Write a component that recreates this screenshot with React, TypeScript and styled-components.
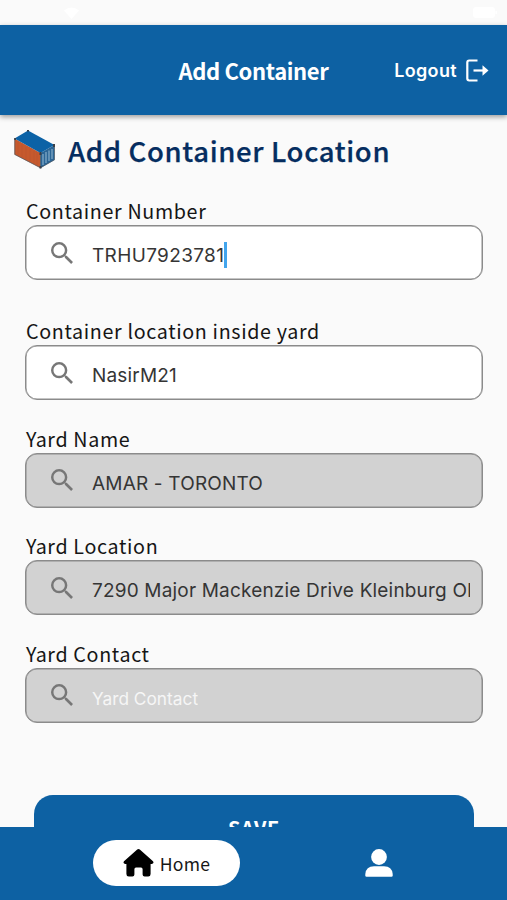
import React from "react";
import styled, { createGlobalStyle } from "styled-components";

const BLUE = "#0d61a3";
const HUMANIST = `"Noto Sans CJK JP", "Noto Sans CJK SC", "Noto Sans", sans-serif`;
const GROTESQUE = `Inter, Roboto, sans-serif`;

const GlobalStyle = createGlobalStyle`
  *, *::before, *::after { box-sizing: border-box; }
  body { margin: 0; background: #fafafa; }
`;

const Screen = styled.div`
  display: flex;
  flex-direction: column;
  width: 100%;
  height: 900px;
  overflow: hidden;
  background: #fafafa;
  font-family: ${HUMANIST};
`;

const StatusBar = styled.div`
  flex: 0 0 25px;
  display: flex;
  align-items: center;
  justify-content: space-between;
  padding: 0 10px 0 64px;
`;

const Header = styled.header`
  flex: 0 0 90px;
  display: grid;
  grid-template-columns: 1fr auto 1fr;
  align-items: center;
  padding: 0 18px;
  background: ${BLUE};
  color: #fff;
  box-shadow: 0 2px 5px rgba(0, 0, 0, 0.38);
  z-index: 1;
`;

const HeaderTitle = styled.h1`
  grid-column: 2;
  margin: 0;
  font-size: 22px;
  font-weight: 700;
  line-height: 30px;
  letter-spacing: -0.35px;
  white-space: nowrap;
`;

const LogoutButton = styled.button`
  justify-self: end;
  display: flex;
  align-items: center;
  gap: 9px;
  margin-top: 2px;
  padding: 0;
  border: 0;
  background: none;
  color: #fff;
  font: 600 18px/24px ${GROTESQUE};
  letter-spacing: 0.35px;
`;

const LogoutSvg = styled.svg`
  margin-top: -1px;
`;

const Content = styled.main`
  flex: 1;
  min-height: 0;
  overflow: hidden;
`;

const Heading = styled.div`
  display: flex;
  align-items: center;
  height: 83px;
  padding: 0 0 14px 14px;
  gap: 13px;
`;

const HeadingText = styled.h2`
  margin: 0;
  color: #052d60;
  font-size: 27.5px;
  font-weight: 500;
  line-height: 36px;
  letter-spacing: 0.65px;
  -webkit-text-stroke: 0.25px #052d60;
  white-space: nowrap;
`;

const Form = styled.form`
  display: flex;
  flex-direction: column;
`;

const Field = styled.label<{ $gap: number }>`
  display: flex;
  flex-direction: column;
  padding: 0 24px 0 25px;
  margin-bottom: ${(p) => p.$gap}px;
`;

const FieldLabel = styled.span`
  height: 27px;
  padding-left: 1px;
  color: #151515;
  font-size: 19.7px;
  line-height: 26px;
  letter-spacing: 0.65px;
  white-space: nowrap;
`;

const FieldBox = styled.span<{ $disabled?: boolean }>`
  display: flex;
  align-items: center;
  height: 55px;
  padding: 5px 12px 0 24px;
  border: 1px solid #8b8b8b;
  border-radius: 12px;
  box-shadow: inset 0 0 0 0.5px #8b8b8b;
  background: ${(p) => (p.$disabled ? "#d2d2d2" : "#fff")};
`;

const SearchSvg = styled.svg`
  flex: none;
  width: 22px;
  height: 22px;
  margin: -5px 19px 0 1px;
  fill: #777;
`;

const FieldValue = styled.span<{ $placeholder?: boolean; $focused?: boolean }>`
  min-width: 0;
  overflow: hidden;
  white-space: nowrap;
  font-family: ${GROTESQUE};
  font-size: ${(p) => (p.$placeholder ? "17.3px" : "19px")};
  line-height: 28px;
  padding-top: ${(p) => (p.$placeholder ? "3px" : "2px")};
  letter-spacing: ${(p) => (p.$placeholder ? "0" : p.$focused ? "0.35px" : "0.18px")};
  color: ${(p) => (p.$placeholder ? "#f6f6f6" : "#353535")};
`;

const Caret = styled.span`
  flex: none;
  width: 3px;
  height: 26px;
  background: #42a5ed;
`;

const SaveButton = styled.button`
  height: 66px;
  margin: 45px 33px 0 34px;
  padding: 0;
  border: 0;
  border-radius: 19px;
  background: ${BLUE};
  color: #fff;
  font: 700 20px/66px ${HUMANIST};
  letter-spacing: 0.6px;
`;

const BottomNav = styled.nav`
  flex: 0 0 73px;
  display: grid;
  grid-template-columns: 333px 92px;
  align-items: center;
  background: ${BLUE};
  z-index: 1;
`;

const NavItem = styled.a<{ $active?: boolean }>`
  justify-self: center;
  display: flex;
  align-items: center;
  justify-content: center;
  gap: 6px;
  width: ${(p) => (p.$active ? "147px" : "28px")};
  height: 46px;
  margin-top: -1px;
  border-radius: 23px;
  background: ${(p) => (p.$active ? "#fff" : "transparent")};
  color: #171717;
  font-size: 17.6px;
  letter-spacing: 0.2px;
`;

const WifiIcon = () => (
  <svg width="15" height="12" viewBox="0 0 15 12" aria-hidden="true">
    <path d="M0 3.5Q7.5-2.5 15 3.5L7.5 12Z" fill="#fff" />
  </svg>
);

const BatteryIcon = () => (
  <svg width="24" height="11" viewBox="0 0 24 11" aria-hidden="true">
    <rect width="22" height="11" rx="3" fill="#fff" />
    <rect x="22.5" y="4" width="1.5" height="3" fill="#fff" />
  </svg>
);

const ContainerIcon = () => (
  <svg width="41" height="39" viewBox="0 0 41 39" aria-hidden="true">
    <path d="M0.5 8.5 26.5 23V38L0.5 24.5Z" fill="#c6592d" />
    <path d="M26.5 23 40.5 15V30L26.5 38Z" fill="#2b6595" />
    <path d="M14 0.5 40.5 15 26.5 23 0.5 8.5Z" fill="#0c62a6" />
    <path d="M4 12.5v13M8 14.5v13M12 17v12.5M16 19v13M20 21v13M23 22.5v13" stroke="#b8542f" strokeWidth=".6" />
    <path d="M29 24v11M32 22v11M35 20.5v10.5M38 19v10" stroke="#8fb5d0" strokeWidth="1.1" />
    <path d="M.8 8.5v16l25.7 13.3 14-8V15M26.5 23v15" fill="none" stroke="#4b5660" strokeWidth=".7" />
    <path d="M.2 8h1.8v2H.2zM13 0h2v1.5h-2zM25.5 22h2v3h-2zM39 14h2v3h-2zM25.5 36h2v2.5h-2z" fill="#3b3f47" />
  </svg>
);

const LogoutIcon = () => (
  <LogoutSvg width="23" height="23" viewBox="0 0 23 23" fill="none" stroke="#fff" strokeWidth="2.2" aria-hidden="true">
    <path d="M11.5 1.5H3.2Q1.3 1.5 1.3 3.4V19.6Q1.3 21.5 3.2 21.5H11.5" />
    <path d="M7.5 11.5H19" />
    <path d="m16.5 6.2 6 5.3-6 5.3z" fill="#fff" stroke="none" />
  </LogoutSvg>
);

const SearchIcon = () => (
  <SearchSvg viewBox="3 3 17.5 17.5" aria-hidden="true">
    <path d="M15.5 14h-.79l-.28-.27A6.471 6.471 0 0 0 16 9.5 6.5 6.5 0 1 0 9.5 16c1.61 0 3.09-.59 4.23-1.57l.27.28v.79l5 4.99L20.49 19l-4.99-5zm-6 0C7.01 14 5 11.99 5 9.5S7.01 5 9.5 5 14 7.01 14 9.5 11.99 14 9.5 14z" />
  </SearchSvg>
);

const HomeIcon = () => (
  <svg width="31" height="28" viewBox="0 0 31 28" aria-hidden="true">
    <path
      d="M14.2.6Q15.5-.5 16.8.6L30 12.2Q31.4 14.4 29 14.9H27.6V25Q27.6 27.5 25.2 27.5H21.6Q19.6 27.5 19.6 25.5V20.2Q19.6 18.5 18 18.5H13Q11.4 18.5 11.4 20.2V25.5Q11.4 27.5 9.4 27.5H5.8Q3.4 27.5 3.4 25V14.9H2Q-.4 14.4 1 12.2Z"
      fill="#000"
    />
  </svg>
);

const PersonIcon = () => (
  <svg width="28" height="28" viewBox="0 0 28 28" fill="#fff" aria-hidden="true">
    <circle cx="14" cy="8" r="7.9" />
    <path d="M.3 26.5V25Q1 17.2 9 17.2H19Q27 17.2 27.7 25V26.5Q27.7 27.7 26.5 27.7H1.5Q.3 27.7.3 26.5Z" />
  </svg>
);

interface FieldData {
  label: string;
  value?: string;
  placeholder?: string;
  disabled?: boolean;
  focused?: boolean;
  gap: number;
}

const fields: FieldData[] = [
  { label: "Container Number", value: "TRHU7923781", focused: true, gap: 38 },
  { label: "Container location inside yard", value: "NasirM21", gap: 25.5 },
  { label: "Yard Name", value: "AMAR - TORONTO", disabled: true, gap: 25.5 },
  { label: "Yard Location", value: "7290 Major Mackenzie Drive Kleinburg ON", disabled: true, gap: 25.5 },
  { label: "Yard Contact", placeholder: "Yard Contact", disabled: true, gap: 27 },
];

export default function App() {
  return (
    <>
      <GlobalStyle />
      <Screen>
        <StatusBar>
          <WifiIcon />
          <BatteryIcon />
        </StatusBar>
        <Header>
          <HeaderTitle>Add Container</HeaderTitle>
          <LogoutButton type="button">
            Logout
            <LogoutIcon />
          </LogoutButton>
        </Header>
        <Content>
          <Heading>
            <ContainerIcon />
            <HeadingText>Add Container Location</HeadingText>
          </Heading>
          <Form>
            {fields.map((f) => (
              <Field key={f.label} $gap={f.gap}>
                <FieldLabel>{f.label}</FieldLabel>
                <FieldBox $disabled={f.disabled}>
                  <SearchIcon />
                  <FieldValue $placeholder={!f.value} $focused={f.focused}>
                    {f.value ?? f.placeholder}
                  </FieldValue>
                  {f.focused && <Caret />}
                </FieldBox>
              </Field>
            ))}
            <SaveButton type="button">SAVE</SaveButton>
          </Form>
        </Content>
        <BottomNav>
          <NavItem $active>
            <HomeIcon />
            Home
          </NavItem>
          <NavItem aria-label="Profile">
            <PersonIcon />
          </NavItem>
        </BottomNav>
      </Screen>
    </>
  );
}
